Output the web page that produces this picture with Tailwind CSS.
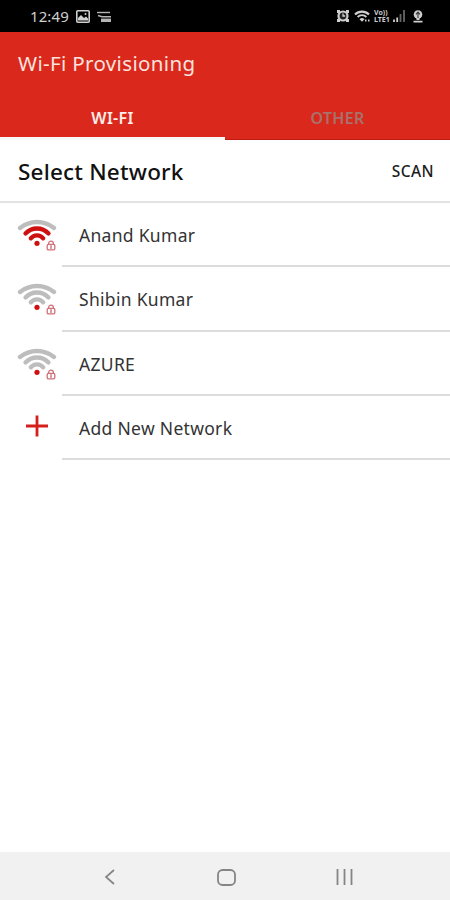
<!DOCTYPE html>
<html lang="en">
<head>
  <title>Wi-Fi Provisioning</title>
  <meta charset="UTF-8">
  <meta name="viewport" content="width=device-width, initial-scale=1.0">
  <script src="https://cdn.jsdelivr.net/npm/@tailwindcss/browser@4"></script>
</head>
<body class="bg-white font-['Noto_Sans',sans-serif]">
  <!-- Shared icon shapes -->
  <svg class="hidden">
    <symbol id="lock" viewBox="0 0 10 11">
      <path d="M2.6 5V3.6a2.4 2.4 0 014.8 0V5" fill="none" stroke="#cf7077" stroke-width="1.3"/>
      <rect x="1.2" y="4.4" width="7.6" height="5.4" rx="1.2" fill="#fff" stroke="#cf7077" stroke-width="1.3"/>
      <path d="M5 5.8v2.6" stroke="#cf7077" stroke-width="1.4"/>
    </symbol>
  </svg>
  <div class="h-[900px] w-[450px] flex flex-col overflow-hidden">
    <!-- Status bar -->
    <div class="h-8 shrink-0 bg-black flex items-center pl-[30px] pr-[27px] text-[#cfcfcf]">
      <span class="text-[15px] leading-none tracking-[0.1px] w-[46px]">12:49</span>
      <svg class="w-[14px] h-[13px]" viewBox="0 0 14 13">
        <rect x="0.8" y="0.8" width="12.4" height="11.4" rx="1" fill="none" stroke="currentColor" stroke-width="1.6"/>
        <path d="M2 10.5V8l3-3 3 3 2-1.5 2 2v2z" fill="currentColor"/>
        <circle cx="9.5" cy="4" r="1" fill="currentColor"/>
      </svg>
      <svg class="w-[14px] h-[12px] ml-[7px] mt-[2px]" viewBox="0 0 14 12" fill="none" stroke="#b5b5b5">
        <path d="M0 1.5h13" stroke-width="1.4"/>
        <path d="M1 4.5l4 1.2h9" stroke-width="1.5"/>
        <path d="M4 9.3h10" stroke-width="3.4"/>
      </svg>
      <div class="ml-auto flex items-center">
        <svg class="w-[14px] h-[14px]" viewBox="0 0 14 14">
          <path d="M1 1h3v3H1zM10 1h3v3h-3zM1 10h3v3H1zM10 10h3v3h-3z" fill="currentColor"/>
          <circle cx="7" cy="7" r="5.6" fill="currentColor"/>
          <circle cx="7" cy="7" r="3.4" fill="#222"/>
          <path d="M7 4.5V7h2.2" fill="none" stroke="currentColor" stroke-width="1.3"/>
        </svg>
        <svg class="w-[16px] h-[13px] ml-[4px]" viewBox="0 0 16 13" fill="none" stroke="currentColor">
          <path d="M1 4.5a10 10 0 0114 0" stroke-width="2.2"/>
          <path d="M3.6 7a6.3 6.3 0 018.8 0" stroke-width="1.8"/>
          <path d="M5.5 9.2a3.6 3.6 0 015 0L8 11.7z" fill="currentColor" stroke="none"/>
          <path d="M11 10.5h1.5M14 10.5h1.5" stroke-width="2"/>
        </svg>
        <div class="ml-[4px] w-[18px] flex flex-col text-[7px] leading-[7px] font-bold">
          <span>Vo))</span>
          <span>LTE1</span>
        </div>
        <svg class="w-[14px] h-[12px]" viewBox="0 0 14 12" fill="none" stroke-width="1.8">
          <path d="M2 12V9.5M5.2 12V7.5" stroke="currentColor"/>
          <path d="M8.5 12V4M12 12V0" stroke="#666"/>
        </svg>
        <svg class="w-[10px] h-[13px] ml-[7px]" viewBox="0 0 10 13">
          <circle cx="5" cy="4.5" r="4.3" fill="currentColor"/>
          <path d="M5 8V2M3 4.4L5 2l2 2.4" fill="none" stroke="#333" stroke-width="1.1"/>
          <path d="M3.5 9h3M0.5 11.7h9" stroke="currentColor" stroke-width="1.8"/>
        </svg>
      </div>
    </div>

    <!-- App bar with tabs -->
    <header class="h-[108px] shrink-0 bg-[#da291c] flex flex-col">
      <h1 class="h-[62px] flex items-center pl-[18px] text-[20.5px] tracking-[0.35px] text-[#fbe3df]">Wi-Fi Provisioning</h1>
      <nav class="flex-1 grid grid-cols-2 text-base font-semibold text-center">
        <a class="border-b-[3px] border-[#f8f8f8] flex items-center justify-center pt-[4px] tracking-[0.3px] text-[#fdeeec]">WI-FI</a>
        <a class="border-b border-[#bd1a12] flex items-center justify-center pt-[2px] tracking-[0.3px] text-[#a8716b]">OTHER</a>
      </nav>
    </header>

    <!-- Section title -->
    <div class="h-[63px] shrink-0 flex items-center justify-between pl-[18px] pr-[16px] pt-[2px] border-b-2 border-[#e3e3e3]">
      <h2 class="text-[22.5px] font-medium tracking-[0.2px] text-[#111]">Select Network</h2>
      <button class="text-[15.5px] font-medium tracking-[0.4px] text-[#1c1c1c]">SCAN</button>
    </div>

    <!-- Network list -->
    <ul class="text-[17.5px] tracking-[0.3px] text-[#333]">
      <li class="h-[64.25px] flex">
        <div class="w-[62px] pl-[17px] pt-[16px]">
          <svg class="w-10 h-8" viewBox="0 0 40 32" fill="none" stroke-width="4.3" stroke-linecap="round">
            <path d="M3 9A27 27 0 0137 9" stroke="#bdbdbd"/>
            <path d="M8.5 14.5A15.7 15.7 0 0131.5 14.5" stroke="#cf1010"/>
            <path d="M13.8 19.3A7.9 7.9 0 0126.2 19.3" stroke="#cf1010"/>
            <circle cx="20" cy="24.3" r="2.6" fill="#cf1010"/>
            <use href="#lock" x="29" y="21" width="10" height="11"/>
          </svg>
        </div>
        <div class="flex-1 flex items-center pl-[17px] pt-[2px] border-b-2 border-[#dcdcdc]">Anand Kumar</div>
      </li>
      <li class="h-[64.25px] flex">
        <div class="w-[62px] pl-[17px] pt-[16px]">
          <svg class="w-10 h-8" viewBox="0 0 40 32" fill="none" stroke-width="4.3" stroke-linecap="round">
            <path d="M3 9A27 27 0 0137 9" stroke="#bdbdbd"/>
            <path d="M8.5 14.5A15.7 15.7 0 0131.5 14.5" stroke="#bdbdbd"/>
            <path d="M13.8 19.3A7.9 7.9 0 0126.2 19.3" stroke="#bdbdbd"/>
            <circle cx="20" cy="24.3" r="2.6" fill="#cf1010"/>
            <use href="#lock" x="29" y="21" width="10" height="11"/>
          </svg>
        </div>
        <div class="flex-1 flex items-center pl-[17px] pt-[2px] border-b-2 border-[#dcdcdc]">Shibin Kumar</div>
      </li>
      <li class="h-[64.25px] flex">
        <div class="w-[62px] pl-[17px] pt-[16px]">
          <svg class="w-10 h-8" viewBox="0 0 40 32" fill="none" stroke-width="4.3" stroke-linecap="round">
            <path d="M3 9A27 27 0 0137 9" stroke="#bdbdbd"/>
            <path d="M8.5 14.5A15.7 15.7 0 0131.5 14.5" stroke="#bdbdbd"/>
            <path d="M13.8 19.3A7.9 7.9 0 0126.2 19.3" stroke="#bdbdbd"/>
            <circle cx="20" cy="24.3" r="2.6" fill="#cf1010"/>
            <use href="#lock" x="29" y="21" width="10" height="11"/>
          </svg>
        </div>
        <div class="flex-1 flex items-center pl-[17px] pt-[2px] border-b-2 border-[#dcdcdc]">AZURE</div>
      </li>
      <li class="h-[64.25px] flex">
        <div class="w-[62px] pl-[26px] pt-[19px]">
          <svg class="w-[22px] h-[22px]" viewBox="0 0 22 22" stroke="#d41f1a" stroke-width="2.8">
            <path d="M11 0.5v21M0 11h22"/>
          </svg>
        </div>
        <div class="flex-1 flex items-center pl-[17px] pt-[2px] border-b-2 border-[#dcdcdc]">Add New Network</div>
      </li>
    </ul>

    <!-- System navigation -->
    <div class="mt-auto h-12 shrink-0 bg-[#f1f1f1] flex items-center pl-[104px] pr-[97px] pt-[2px] justify-between">
      <svg class="w-[11px] h-[16px]" viewBox="0 0 11 16" fill="none" stroke="#858585" stroke-width="1.7">
        <path d="M10 1L2 8l8 7"/>
      </svg>
      <svg class="w-[19px] h-[17px] ml-[2px]" viewBox="0 0 19 17" fill="none" stroke="#858585" stroke-width="1.8">
        <rect x="1" y="1" width="17" height="15" rx="4.5"/>
      </svg>
      <svg class="w-[17px] h-[16px]" viewBox="0 0 17 16" stroke="#858585" stroke-width="1.8">
        <path d="M1.5 0v16M8.5 0v16M15.5 0v16"/>
      </svg>
    </div>
  </div>
</body>
</html>
